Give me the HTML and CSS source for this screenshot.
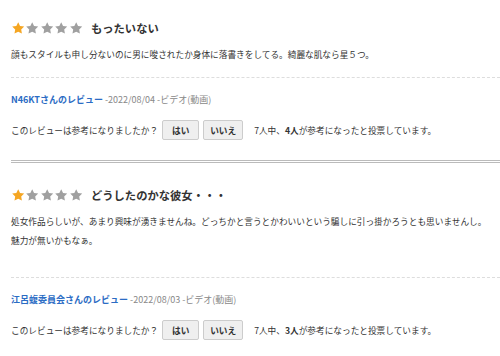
FILE: index.html
```html
<!DOCTYPE html>
<html lang="ja">
<head>
  <meta charset="UTF-8" />
  <title>レビュー</title>
  <link rel="stylesheet" href="styles.css">
</head>
<body>
  <!-- レビュー 1 -->
  <div class="review">
    <div class="review-head">
      <div class="stars">
        <svg class="star on" viewBox="0 0 24 24"><path d="M12 2l3.09 6.26L22 9.27l-5 4.87 1.18 6.88L12 17.77l-6.18 3.25L7 14.14 2 9.27l6.91-1.01z"/></svg>
        <svg class="star" viewBox="0 0 24 24"><path d="M12 2l3.09 6.26L22 9.27l-5 4.87 1.18 6.88L12 17.77l-6.18 3.25L7 14.14 2 9.27l6.91-1.01z"/></svg>
        <svg class="star" viewBox="0 0 24 24"><path d="M12 2l3.09 6.26L22 9.27l-5 4.87 1.18 6.88L12 17.77l-6.18 3.25L7 14.14 2 9.27l6.91-1.01z"/></svg>
        <svg class="star" viewBox="0 0 24 24"><path d="M12 2l3.09 6.26L22 9.27l-5 4.87 1.18 6.88L12 17.77l-6.18 3.25L7 14.14 2 9.27l6.91-1.01z"/></svg>
        <svg class="star" viewBox="0 0 24 24"><path d="M12 2l3.09 6.26L22 9.27l-5 4.87 1.18 6.88L12 17.77l-6.18 3.25L7 14.14 2 9.27l6.91-1.01z"/></svg>
      </div>
      <h2 class="review-title">もったいない</h2>
    </div>
    <p class="review-text">顔もスタイルも申し分ないのに男に唆されたか身体に落書きをしてる。綺麗な肌なら星５つ。</p>
    <div class="review-meta">
      <a href="#" class="reviewer">N46KTさんのレビュー</a> <span class="date">-2022/08/04 -ビデオ(動画)</span>
    </div>
    <div class="vote">
      <span>このレビューは参考になりましたか？</span>
      <button class="vote-btn">はい</button>
      <button class="vote-btn">いいえ</button>
      <span class="vote-count">7人中、<b>4人</b>が参考になったと投票しています。</span>
    </div>
  </div>

  <!-- レビュー 2 -->
  <div class="review review-next">
    <div class="review-head">
      <div class="stars">
        <svg class="star on" viewBox="0 0 24 24"><path d="M12 2l3.09 6.26L22 9.27l-5 4.87 1.18 6.88L12 17.77l-6.18 3.25L7 14.14 2 9.27l6.91-1.01z"/></svg>
        <svg class="star" viewBox="0 0 24 24"><path d="M12 2l3.09 6.26L22 9.27l-5 4.87 1.18 6.88L12 17.77l-6.18 3.25L7 14.14 2 9.27l6.91-1.01z"/></svg>
        <svg class="star" viewBox="0 0 24 24"><path d="M12 2l3.09 6.26L22 9.27l-5 4.87 1.18 6.88L12 17.77l-6.18 3.25L7 14.14 2 9.27l6.91-1.01z"/></svg>
        <svg class="star" viewBox="0 0 24 24"><path d="M12 2l3.09 6.26L22 9.27l-5 4.87 1.18 6.88L12 17.77l-6.18 3.25L7 14.14 2 9.27l6.91-1.01z"/></svg>
        <svg class="star" viewBox="0 0 24 24"><path d="M12 2l3.09 6.26L22 9.27l-5 4.87 1.18 6.88L12 17.77l-6.18 3.25L7 14.14 2 9.27l6.91-1.01z"/></svg>
      </div>
      <h2 class="review-title">どうしたのかな彼女・・・</h2>
    </div>
    <p class="review-text review-text-long">処女作品らしいが、あまり興味が湧きませんね。どっちかと言うとかわいいという騙しに引っ掛かろうとも思いませんし。<br>魅力が無いかもなぁ。</p>
    <div class="review-meta">
      <a href="#" class="reviewer">江呂蝮委員会さんのレビュー</a> <span class="date">-2022/08/03 -ビデオ(動画)</span>
    </div>
    <div class="vote">
      <span>このレビューは参考になりましたか？</span>
      <button class="vote-btn">はい</button>
      <button class="vote-btn">いいえ</button>
      <span class="vote-count">7人中、<b>3人</b>が参考になったと投票しています。</span>
    </div>
  </div>
</body>
</html>
```

FILE: styles.css
```css
/* === ベース === */
body {
  margin: 0;
  font-family: "Noto Sans CJK JP", "Noto Sans", sans-serif;
  font-size: 8.67px;
  color: #333;
  background: #fff;
  padding-left: 11px;
  overflow: hidden;
}

/* === レビュー === */
.review {
  padding-top: 20px;
  padding-bottom: 20px;
}

.review-next {
  border-top: 3px double #bbb;
  padding-top: 24px;
}

.review-head {
  display: flex;
  align-items: center;
  gap: 8px;
  height: 16px;
}

.stars {
  display: flex;
}

.star {
  width: 14.4px;
  height: 14.4px;
  fill: #a0a0a0;
}

.star.on {
  fill: #f5a623;
}

.review-title {
  margin: 0;
  font-size: 11.3px;
  font-weight: bold;
  color: #333;
}

.review-text {
  margin: 8.5px 0 0;
  line-height: 19px;
  padding-bottom: 13.5px;
  border-bottom: 1px dashed #ddd;
}

.review-text-long {
  padding-bottom: 27.5px;
}

/* === 投稿者 === */
.review-meta {
  margin-top: 15px;
  line-height: 14px;
  font-size: 9px;
}

.reviewer {
  color: #2b6cc4;
  font-weight: bold;
  text-decoration: none;
}

.date {
  color: #888;
}

/* === 投票 === */
.vote {
  display: flex;
  align-items: center;
  margin-top: 13px;
  height: 20px;
}

.vote-btn {
  font-family: inherit;
  font-size: 8.67px;
  font-weight: bold;
  color: #333;
  background: #efefef;
  border: 1px solid #ccc;
  border-radius: 2px;
  height: 20px;
  min-width: 37px;
  padding: 0 6px;
  margin-left: 4px;
}

.vote-count {
  margin-left: 11px;
}

.vote-count b {
  font-weight: bold;
}
```
